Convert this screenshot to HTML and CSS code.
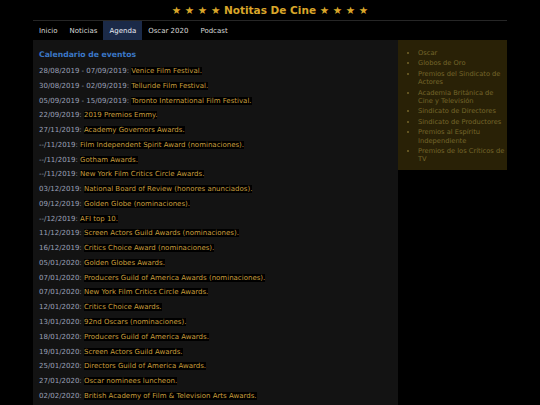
FILE: index.html
```html
<!DOCTYPE html>
<html lang="es">
<head>
<meta charset="utf-8">
<title>Notitas De Cine - Agenda</title>
<link rel="stylesheet" href="styles.css">
</head>
<body>
<div class="page">
  <header class="site-header">
    <h1 class="site-title">★ ★ ★ ★ Notitas De Cine ★ ★ ★ ★</h1>
  </header>
  <nav class="nav">
    <a class="nav-item" href="#">Inicio</a>
    <a class="nav-item" href="#">Noticias</a>
    <a class="nav-item active" href="#">Agenda</a>
    <a class="nav-item" href="#">Oscar 2020</a>
    <a class="nav-item" href="#">Podcast</a>
  </nav>
  <div class="content">
    <main class="main">
      <h2 class="section-title">Calendario de eventos</h2>
      <ul class="events">
        <li><span class="date">28/08/2019 - 07/09/2019:</span> <span class="name">Venice Film Festival.</span></li>
        <li><span class="date">30/08/2019 - 02/09/2019:</span> <span class="name">Telluride Film Festival.</span></li>
        <li><span class="date">05/09/2019 - 15/09/2019:</span> <span class="name">Toronto International Film Festival.</span></li>
        <li><span class="date">22/09/2019:</span> <span class="name">2019 Premios Emmy.</span></li>
        <li><span class="date">27/11/2019:</span> <span class="name">Academy Governors Awards.</span></li>
        <li><span class="date">--/11/2019:</span> <span class="name">Film Independent Spirit Award (nominaciones).</span></li>
        <li><span class="date">--/11/2019:</span> <span class="name">Gotham Awards.</span></li>
        <li><span class="date">--/11/2019:</span> <span class="name">New York Film Critics Circle Awards.</span></li>
        <li><span class="date">03/12/2019:</span> <span class="name">National Board of Review (honores anunciados).</span></li>
        <li><span class="date">09/12/2019:</span> <span class="name">Golden Globe (nominaciones).</span></li>
        <li><span class="date">--/12/2019:</span> <span class="name">AFI top 10.</span></li>
        <li><span class="date">11/12/2019:</span> <span class="name">Screen Actors Guild Awards (nominaciones).</span></li>
        <li><span class="date">16/12/2019:</span> <span class="name">Critics Choice Award (nominaciones).</span></li>
        <li><span class="date">05/01/2020:</span> <span class="name">Golden Globes Awards.</span></li>
        <li><span class="date">07/01/2020:</span> <span class="name">Producers Guild of America Awards (nominaciones).</span></li>
        <li><span class="date">07/01/2020:</span> <span class="name">New York Film Critics Circle Awards.</span></li>
        <li><span class="date">12/01/2020:</span> <span class="name">Critics Choice Awards.</span></li>
        <li><span class="date">13/01/2020:</span> <span class="name">92nd Oscars (nominaciones).</span></li>
        <li><span class="date">18/01/2020:</span> <span class="name">Producers Guild of America Awards.</span></li>
        <li><span class="date">19/01/2020:</span> <span class="name">Screen Actors Guild Awards.</span></li>
        <li><span class="date">25/01/2020:</span> <span class="name">Directors Guild of America Awards.</span></li>
        <li><span class="date">27/01/2020:</span> <span class="name">Oscar nominees luncheon.</span></li>
        <li><span class="date">02/02/2020:</span> <span class="name">British Academy of Film &amp; Television Arts Awards.</span></li>
      </ul>
    </main>
    <aside class="sidebar">
      <ul class="side-list">
        <li>Oscar</li>
        <li>Globos de Oro</li>
        <li>Premios del Sindicato de Actores</li>
        <li>Academia Británica de Cine y Televisión</li>
        <li>Sindicato de Directores</li>
        <li>Sindicato de Productores</li>
        <li>Premios al Espíritu Independiente</li>
        <li>Premios de los Críticos de TV</li>
      </ul>
    </aside>
  </div>
</div>
</body>
</html>
```

FILE: styles.css
```css
html, body {
  margin: 0;
  padding: 0;
  background: #000;
}
body {
  font-family: "DejaVu Sans", Verdana, sans-serif;
}
.page {
  width: 474px;
  margin: 0 auto;
}
.site-header {
  height: 20px;
  border-bottom: 1px solid #262626;
  display: flex;
  align-items: center;
  justify-content: center;
}
.site-title {
  margin: 0;
  font-size: 10.5px;
  font-weight: bold;
  color: #d9a62a;
  line-height: 18px;
}
.nav {
  display: flex;
  height: 19px;
  background: #000;
}
.nav-item {
  display: flex;
  align-items: center;
  padding: 0 6px;
  font-size: 7px;
  color: #d8d8d8;
  text-decoration: none;
}
.nav-item.active {
  background: #1b2a48;
  color: #e8ecf4;
}
.content {
  display: flex;
  align-items: flex-start;
}
.main {
  width: 365px;
  background: #131313;
  padding: 7px 6px 1px 6px;
  box-sizing: border-box;
}
.section-title {
  margin: 2px 0 4px 0;
  font-size: 7.7px;
  font-weight: bold;
  color: #3b78c8;
  line-height: 11px;
}
.events {
  list-style: none;
  margin: 0;
  padding: 0;
}
.events li {
  font-size: 7px;
  line-height: 14.76px;
  white-space: nowrap;
}
.date {
  color: #9ba0b8;
}
.name {
  color: #c99f3c;
  background: #000;
}
.sidebar {
  width: 109px;
  background: #292106;
  padding: 9px 0 6px 0;
  box-sizing: border-box;
}
.side-list {
  margin: 0;
  padding: 0 0 0 20px;
  color: #74652a;
  font-size: 6.7px;
  line-height: 8.4px;
}
.side-list li {
  margin-bottom: 2px;
}
.side-list li:last-child {
  margin-bottom: 0;
}
```
